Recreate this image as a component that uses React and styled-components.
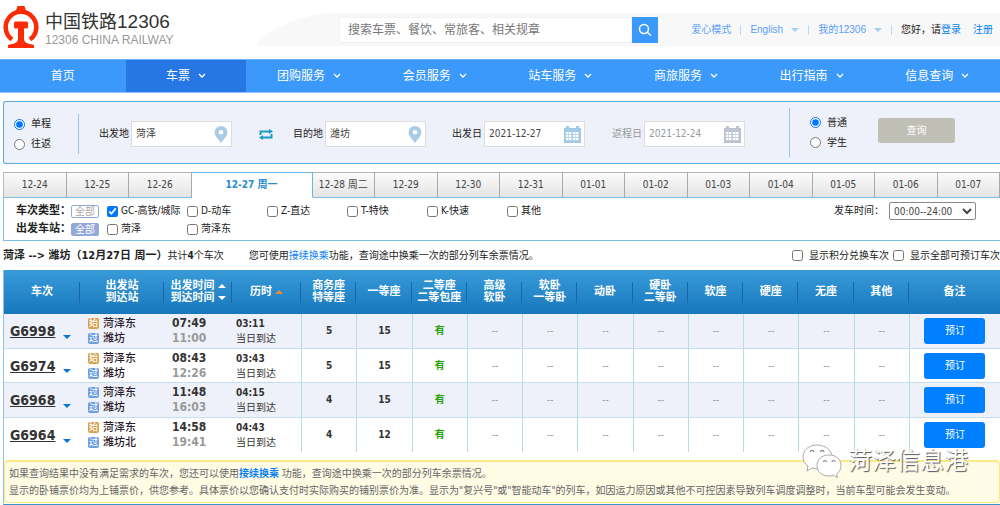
import React, { useState } from 'react';
import styled, { createGlobalStyle } from 'styled-components';

//==============================Global Styles===========================
const GlobalStyle = createGlobalStyle`
* { box-sizing: border-box; }
body {
  margin: 0;
  background: white;
  color: #222;
  font-family: "DejaVu Sans Condensed", "Noto Sans CJK SC", sans-serif;
  font-size: 10px;
  line-height: 14px;
  overflow-x: hidden;
}
a { color: #0a82f5; text-decoration: none; }
button, input, select { font: inherit; margin: 0; }
`;

//==============================Header===========================
const Header = styled.header`
display: flex;
align-items: center;
height: 59px;
font-family: "Liberation Sans", "Noto Sans CJK SC", sans-serif;
`;

const Logo = styled.a`
display: flex;
align-items: center;
gap: 6px;
width: 255px;
padding-left: 3px;
padding-bottom: 5px;
flex-shrink: 0;
`;

const LogoText = styled.span`
padding-top: 4px;
`;

const LogoName = styled.span`
display: block;
color: #333;
font-size: 18px;
line-height: 22px;
`;

const LogoNumber = styled.span`
font-size: 19px;
`;

const LogoSub = styled.span`
display: block;
color: #999;
font-size: 12px;
line-height: 14px;
white-space: nowrap;
`;

const Curve = styled.svg`
display: block;
flex-shrink: 0;
`;

const Band = styled.div`
display: flex;
align-items: center;
justify-content: space-between;
flex: 1;
height: 33px;
background: #f8f8f8;
padding-right: 7px;
white-space: nowrap;
`;

const SearchForm = styled.form`
display: flex;
width: 319px;
height: 26px;
`;

const SearchInput = styled.input`
flex: 1;
min-width: 0;
border: 1px solid #f1f1f1;
background: white;
padding: 0 8px;
font-size: 12px;
&::placeholder { color: #777; opacity: 1; }
&:focus { outline: 1px solid #3b99fc; }
`;

const SearchButton = styled.button`
display: flex;
align-items: center;
justify-content: center;
width: 26px;
padding: 0;
border: 0;
background: #3b99fc;
cursor: pointer;
`;

const UserLinks = styled.div`
display: flex;
align-items: center;
color: #222;
`;

const UserLink = styled.a`
display: flex;
align-items: center;
gap: 8px;
padding-right: 9px;
margin-right: 9px;
color: #5a9ff5;
border-right: 1px solid #b8dcf8;
line-height: 10px;
`;

const Login = styled.a`
margin-right: 12px;
`;

//==============================Nav===========================
const Nav = styled.nav`
display: flex;
height: 34px;
background: #3b99fc;
border-top: 1px solid #6ab2fb;
border-bottom: 1px solid #8cc4fb;
`;

const NavItem = styled.a`
display: flex;
align-items: center;
justify-content: center;
gap: 8px;
flex: ${props => (props.$active ? 121 : 126)} 1 0;
background: ${props => (props.$active ? '#2676e3' : 'transparent')};
color: white;
font-size: 12px;
&:hover { background: #2676e3; }
`;

//==============================Query panel===========================
const Main = styled.main`
padding: 8px 0 0 3px;
`;

const Panel = styled.form`
display: flex;
align-items: center;
height: 63px;
border: 1px solid #5ba9de;
border-right: 0;
border-radius: 3px 0 0 3px;
background: #eef1f9;
white-space: nowrap;
`;

const RadioGroup = styled.div`
display: flex;
flex-direction: column;
gap: 6px;
padding-left: ${props => props.$left};
width: ${props => props.$width};
height: ${props => props.$height};
justify-content: center;
flex-shrink: 0;
`;

const TripRadios = styled(RadioGroup)`
border-right: 1px solid #8fcaec;
margin-top: 3px;
`;

const Check = styled.label`
display: flex;
align-items: center;
gap: ${props => props.$gap || '3px'};
white-space: nowrap;
input { width: 11px; height: 11px; flex-shrink: 0; }
`;

const Field = styled.label`
display: flex;
align-items: center;
gap: 2px;
margin-left: ${props => props.$left};
margin-top: 3px;
color: ${props => (props.$muted ? '#999' : '#222')};
`;

const Box = styled.span`
display: flex;
align-items: center;
width: 101px;
height: 26px;
padding: 0 3px;
border: 1px solid #dcdcdc;
background: white;
`;

const BoxInput = styled.input`
flex: 1;
min-width: 0;
border: 0;
padding: 0 0 0 1px;
background: transparent;
color: ${props => (props.$muted ? '#999' : '#444')};
&:focus { outline: none; }
`;

const SwapButton = styled.button`
display: flex;
margin-left: 27px;
margin-top: 3px;
padding: 0;
border: 0;
background: transparent;
cursor: pointer;
`;

const TypeRadios = styled(RadioGroup)`
border-left: 1px solid #8fcaec;
margin-left: 44px;
`;

const QueryButton = styled.button`
width: 77px;
height: 25px;
padding: 0;
border: 0;
border-radius: 3px;
background: #bfbfb6;
color: white;
margin-bottom: 4px;
`;

//==============================Date tabs and filters===========================
const Tabs = styled.div`
display: flex;
margin-top: 8px;
border-left: 1px solid #bbb;
`;

const Tab = styled.button`
flex: ${props => (props.$active ? '0 0 121px' : '1 1 0')};
min-width: 0;
height: 26px;
padding: 0;
white-space: nowrap;
cursor: pointer;
border: 0;
border-top: 1px solid ${props => (props.$active ? '#6cb6e8' : '#b5b5b5')};
border-right: 1px solid ${props => (props.$active ? '#6cb6e8' : '#aaa')};
border-bottom: 1px solid ${props => (props.$active ? 'white' : '#7cbde5')};
background: ${props => (props.$active ? 'white' : 'linear-gradient(#fbfbfb, #e4e4e4)')};
color: ${props => (props.$active ? '#2b8bd0' : '#444')};
font-weight: ${props => (props.$active ? 'bold' : 'normal')};
`;

const Filters = styled.div`
display: flex;
justify-content: space-between;
align-items: flex-start;
height: 43px;
padding: 4px 24px 0 12px;
border: 1px solid #7cbde5;
border-top: 0;
border-right: 0;
`;

const FilterRow = styled.div`
display: flex;
align-items: center;
height: 18px;
`;

const FilterName = styled.strong`
width: 55px;
font-size: 11px;
white-space: nowrap;
`;

const AllTag = styled.button`
width: 28px;
height: 13px;
margin-right: 8px;
padding: 0;
line-height: 11px;
border: 1px solid #93a9d8;
border-radius: 2px;
background: ${props => (props.$on ? '#93a9d8' : 'white')};
color: ${props => (props.$on ? 'white' : '#aaa')};
`;

const Option = styled(Check)`
width: 80px;
`;

const TimeFilter = styled.label`
display: flex;
align-items: center;
gap: 5px;
`;

const TimeSelect = styled.select`
width: 87px;
height: 18px;
padding: 0;
border: 1px solid #888;
border-radius: 2px;
background: white;
color: #444;
`;

const Summary = styled.div`
display: flex;
align-items: center;
height: 29px;
white-space: nowrap;
`;

const Route = styled.strong`
font-size: 11px;
`;

const Hint = styled.span`
margin-left: 25px;
flex: 1;
`;

const Switches = styled.div`
display: flex;
gap: 4px;
`;

//==============================Train table===========================
const Results = styled.section`
border-left: 1px solid #8cc5e8;
border-bottom: 1px solid #3a93c8;
padding-bottom: 1px;
`;

const Table = styled.table`
width: 100%;
table-layout: fixed;
border-collapse: separate;
border-spacing: 0;
`;

const HeadRow = styled.tr`
height: 44px;
background: linear-gradient(#389bd9, #1877bd);
`;

const Th = styled.th`
padding: 0;
color: white;
font-size: 11px;
line-height: 12px;
white-space: nowrap;
background: linear-gradient(#1c64a8, #1c64a8) right center / 1px 21px no-repeat;
&:last-child { background: none; }
`;

const SortLine = styled.span`
display: flex;
align-items: center;
justify-content: center;
gap: 3px;
`;

const Row = styled.tr`
height: 34px;
background: white;
&:nth-child(odd) { height: 35px; background: #eef1f9; }
&:not(:last-child) td { border-bottom: 1px solid #c6dfec; }
`;

const Td = styled.td`
padding: 0;
white-space: nowrap;
`;

const SeatTd = styled(Td)`
text-align: center;
border-left: 1px solid #bcd9e6;
color: ${props => props.$color};
font-weight: ${props => (props.$strong ? 'bold' : 'normal')};
`;

const TrainLink = styled.a`
display: flex;
align-items: center;
gap: 8px;
padding-left: 6px;
color: #333;
font-size: 14px;
font-weight: bold;
line-height: 20px;
text-decoration: underline;
svg { margin-top: 11px; }
`;

const Station = styled.div`
display: flex;
align-items: center;
gap: 4px;
padding-left: 8px;
font-size: 11px;
font-weight: 500;
line-height: 15px;
color: #2b1b2b;
`;

const Badge = styled.span`
width: 11px;
height: 11px;
border-radius: 2px;
background: ${props => (props.$start ? '#d9a04c' : '#6d9ee0')};
color: white;
font-size: 9px;
line-height: 11px;
text-align: center;
`;

const Time = styled.div`
padding-left: 8px;
font-size: 12px;
font-weight: bold;
line-height: 15px;
color: ${props => (props.$arrive ? '#999' : '#333')};
`;

const Span = styled.div`
padding-left: 4px;
line-height: 15px;
color: #333;
`;

const BookButton = styled.button`
display: block;
width: 61px;
height: 26px;
margin: 0 auto;
padding: 0;
border: 0;
border-radius: 3px;
background: #0080ff;
color: white;
cursor: pointer;
`;

const Note = styled.div`
margin-top: 8px;
padding: 3px 4px;
border: 1px solid #fbe983;
border-top-width: 2px;
border-radius: 4px;
background: #fffbe5;
color: #666;
line-height: 17px;
white-space: nowrap;
overflow: hidden;
`;

const Watermark = styled.div`
position: absolute;
top: 443px;
right: 32px;
display: flex;
align-items: center;
gap: 6px;
color: white;
font-size: 24px;
line-height: 36px;
text-shadow: 1px 1px 1px #555;
pointer-events: none;
`;

//==============================Icons===========================
function RailLogo() {
  return (
    <svg width="36" height="42" viewBox="0 0 36 42">
      <path d="M9 33.500A15.300 15.300 0 1 1 27 33.500" fill="none" stroke="#fb2c05" strokeWidth="4.500" />
      <path d="M14.500 0h7l2 6h-11z" fill="#fb2c05" />
      <path d="M12.500 15.500h11q1.500 0 1.500 1.500v4q0 1.500-1.500 1.500h-2.500v10q0 4 4 5l6 1.500V42H5v-3l6-1.500q4-1 4-5v-10h-2.500q-1.500 0-1.500-1.500v-4q0-1.500 1.500-1.500z" fill="#fb2c05" />
    </svg>
  );
}

function Chevron() {
  return (
    <svg width="8" height="6" viewBox="0 0 8 6">
      <path d="M1 1l3 3 3-3" fill="none" stroke="white" strokeWidth="1.3" />
    </svg>
  );
}

function Triangle({ color, up, size = 8 }) {
  return (
    <svg width={size} height="4" viewBox="0 0 8 4" preserveAspectRatio="none">
      <path d={up ? 'M0 4h8L4 0z' : 'M0 0h8L4 4z'} fill={color} />
    </svg>
  );
}

function Pin() {
  return (
    <svg width="14" height="17" viewBox="0 0 14 17">
      <path d="M7 0a6.4 6.4 0 0 1 6.4 6.4C13.4 10.500 9.500 13 7 17 4.500 13 .6 10.500.6 6.400A6.400 6.400 0 0 1 7 0z" fill="#a9cce6" />
      <circle cx="7" cy="6.300" r="2.300" fill="white" />
    </svg>
  );
}

function Calendar({ color }) {
  return (
    <svg width="17" height="17" viewBox="0 0 17 17">
      <path d="M0 2h2V0h3v2h7V0h3v2h2v15H0z" fill={color} />
      {[6, 9, 12].map(y => [2, 5, 9, 12].map(x => (
        <rect key={`${x}-${y}`} x={x} y={y} width="2.500" height="2.200" fill="white" />
      )))}
    </svg>
  );
}

function WeChat() {
  return (
    <svg width="40" height="36" viewBox="0 0 40 36">
      <g fill="white" stroke="#aaa" strokeWidth="1">
        <path d="M15 2C7 2 1 7 1 14c0 4 2 7 5 9l-1 5 5-3c10 3 20-2 20-11C30 7 23 2 15 2z" />
        <path d="M27 12c-7 0-12 4-12 10.500S20 33 27 33c1.500 0 3-.2 4.500-.7l4 2.400-1-3.500c2.700-2 4.500-5 4.500-8.500C39 16 34 12 27 12z" />
      </g>
      <g fill="none" stroke="#888" strokeWidth="1.200">
        <path d="M8.500 9a1.700 1.700 0 0 1 3.400 0M18.500 9a1.700 1.700 0 0 1 3.400 0" />
        <path d="M21.500 19a1.500 1.500 0 0 1 3 0M30 19a1.500 1.500 0 0 1 3 0" />
      </g>
    </svg>
  );
}

//==============================Data===========================
const navItems = ['首页', '车票', '团购服务', '会员服务', '站车服务', '商旅服务', '出行指南', '信息查询'];

const dates = ['12-24', '12-25', '12-26', '12-27 周一', '12-28 周二', '12-29', '12-30', '12-31',
  '01-01', '01-02', '01-03', '01-04', '01-05', '01-06', '01-07'];

const trainTypes = ['GC-高铁/城际', 'D-动车', 'Z-直达', 'T-特快', 'K-快速', '其他'];

const seatHeads = [['商务座', '特等座'], ['一等座'], ['二等座', '二等包座'], ['高级', '软卧'], ['软卧', '一等卧'],
  ['动卧'], ['硬卧', '二等卧'], ['软座'], ['硬座'], ['无座'], ['其他']];

const trains = [
  { no: 'G6998', from: '菏泽东', to: '潍坊', start: true, dep: '07:49', arr: '11:00', span: '03:11', seats: ['5', '15', '有'] },
  { no: 'G6974', from: '菏泽东', to: '潍坊', start: true, dep: '08:43', arr: '12:26', span: '03:43', seats: ['5', '15', '有'] },
  { no: 'G6968', from: '菏泽东', to: '潍坊', start: false, dep: '11:48', arr: '16:03', span: '04:15', seats: ['4', '15', '有'] },
  { no: 'G6964', from: '菏泽东', to: '潍坊北', start: true, dep: '14:58', arr: '19:41', span: '04:43', seats: ['4', '12', '有'] },
];

function seatColor(value) {
  if (value === '有') return '#26a306';
  return value === '--' ? '#999' : '#333';
}

//==============================Sections===========================
function TopBar() {
  return (
    <Header>
      <Logo href="#">
        <RailLogo />
        <LogoText>
          <LogoName>中国铁路<LogoNumber>12306</LogoNumber></LogoName>
          <LogoSub>12306 CHINA RAILWAY</LogoSub>
        </LogoText>
      </Logo>
      <Curve width="84" height="33" viewBox="0 0 84 33">
        <path d="M0 33C0 28 34 0 84 0v33z" fill="#f8f8f8" />
      </Curve>
      <Band>
        <SearchForm onSubmit={e => e.preventDefault()}>
          <SearchInput aria-label="搜索" placeholder="搜索车票、餐饮、常旅客、相关规章" />
          <SearchButton type="submit" aria-label="搜索">
            <svg width="14" height="14" viewBox="0 0 14 14" fill="none" stroke="white" strokeWidth="1.500">
              <circle cx="6" cy="6" r="4.500" />
              <path d="M9.300 9.300l3.700 3.200" />
            </svg>
          </SearchButton>
        </SearchForm>
        <UserLinks>
          <UserLink href="#">爱心模式</UserLink>
          <UserLink href="#">English <Triangle color="#a5cff0" /></UserLink>
          <UserLink href="#">我的12306 <Triangle color="#a5cff0" /></UserLink>
          您好，请<Login href="#">登录</Login>
          <a href="#">注册</a>
        </UserLinks>
      </Band>
    </Header>
  );
}

function QueryPanel() {
  return (
    <Panel onSubmit={e => e.preventDefault()}>
      <TripRadios $left="10px" $width="75px" $height="40px">
        <Check $gap="6px"><input type="radio" name="trip" defaultChecked />单程</Check>
        <Check $gap="6px"><input type="radio" name="trip" />往返</Check>
      </TripRadios>
      <Field $left="20px">出发地<Box><BoxInput defaultValue="菏泽" /><Pin /></Box></Field>
      <SwapButton type="button" aria-label="换乘方向">
        <svg width="14" height="11" viewBox="0 0 14 11" fill="none" stroke="#1b9ac4" strokeWidth="2">
          <path d="M1.500 6V2.500H11M12.500 5v3.500H3" />
          <path d="M10 0l4 2.500L10 5zM4 6L0 8.500 4 11z" fill="#1b9ac4" stroke="none" />
        </svg>
      </SwapButton>
      <Field $left="20px">目的地<Box><BoxInput defaultValue="潍坊" /><Pin /></Box></Field>
      <Field $left="26px">出发日<Box><BoxInput defaultValue="2021-12-27" /><Calendar color="#a3cbe8" /></Box></Field>
      <Field $left="27px" $muted>返程日<Box><BoxInput $muted defaultValue="2021-12-24" /><Calendar color="#bcc3d3" /></Box></Field>
      <TypeRadios $left="20px" $width="89px" $height="49px">
        <Check $gap="6px"><input type="radio" name="kind" defaultChecked />普通</Check>
        <Check $gap="6px"><input type="radio" name="kind" />学生</Check>
      </TypeRadios>
      <QueryButton type="submit">查询</QueryButton>
    </Panel>
  );
}

function FilterPanel() {
  return (
    <Filters>
      <div>
        <FilterRow>
          <FilterName>车次类型：</FilterName>
          <AllTag type="button">全部</AllTag>
          {trainTypes.map((type, i) => (
            <Option key={type}><input type="checkbox" defaultChecked={i === 0} />{type}</Option>
          ))}
        </FilterRow>
        <FilterRow>
          <FilterName>出发车站：</FilterName>
          <AllTag type="button" $on>全部</AllTag>
          <Option><input type="checkbox" />菏泽</Option>
          <Option><input type="checkbox" />菏泽东</Option>
        </FilterRow>
      </div>
      <TimeFilter>
        发车时间：
        <TimeSelect><option>00:00--24:00</option></TimeSelect>
      </TimeFilter>
    </Filters>
  );
}

function TrainTable() {
  return (
    <Table>
      <colgroup>
        <col style={{ width: '76px' }} />
        <col style={{ width: '84px' }} />
        <col style={{ width: '68px' }} />
        <col style={{ width: '69px' }} />
        {seatHeads.map((head, i) => <col key={i} style={{ width: '5.55%' }} />)}
        <col />
      </colgroup>
      <thead>
        <HeadRow>
          <Th>车次</Th>
          <Th>出发站<br />到达站</Th>
          <Th>
            <SortLine>出发时间<Triangle color="white" up /></SortLine>
            <SortLine>到达时间<Triangle color="white" /></SortLine>
          </Th>
          <Th><SortLine>历时<Triangle color="#f08a2c" up /></SortLine></Th>
          {seatHeads.map((head, i) => (
            <Th key={i}>{head[0]}{head[1] && <><br />{head[1]}</>}</Th>
          ))}
          <Th>备注</Th>
        </HeadRow>
      </thead>
      <tbody>
        {trains.map(train => (
          <Row key={train.no}>
            <Td><TrainLink href="#">{train.no}<Triangle color="#0a75e0" /></TrainLink></Td>
            <Td>
              <Station><Badge $start={train.start}>{train.start ? '始' : '过'}</Badge>{train.from}</Station>
              <Station><Badge>过</Badge>{train.to}</Station>
            </Td>
            <Td>
              <Time>{train.dep}</Time>
              <Time $arrive>{train.arr}</Time>
            </Td>
            <Td>
              <Span><b>{train.span}</b></Span>
              <Span>当日到达</Span>
            </Td>
            {seatHeads.map((head, i) => {
              const value = train.seats[i] || '--';
              return <SeatTd key={i} $color={seatColor(value)} $strong={value !== '--'}>{value}</SeatTd>;
            })}
            <SeatTd><BookButton type="button">预订</BookButton></SeatTd>
          </Row>
        ))}
      </tbody>
    </Table>
  );
}

function App() {
  const [date, setDate] = useState('12-27 周一');

  return (
    <div>
      <GlobalStyle />
      <TopBar />
      <Nav>
        {navItems.map((item, i) => (
          <NavItem key={item} href="#" $active={item === '车票'}>
            {item}{i > 0 && <Chevron />}
          </NavItem>
        ))}
      </Nav>
      <Main>
        <QueryPanel />
        <Tabs>
          {dates.map(d => (
            <Tab key={d} type="button" $active={d === date} onClick={() => setDate(d)}>{d}</Tab>
          ))}
        </Tabs>
        <FilterPanel />
        <Summary>
          <Route>菏泽 --&gt; 潍坊（12月27日 周一）</Route>共计<b>4</b>个车次
          <Hint>您可使用<a href="#">接续换乘</a>功能，查询途中换乘一次的部分列车余票情况。</Hint>
          <Switches>
            <Check $gap="6px"><input type="checkbox" />显示积分兑换车次</Check>
            <Check $gap="6px"><input type="checkbox" />显示全部可预订车次</Check>
          </Switches>
        </Summary>
        <Results>
          <TrainTable />
          <Note>
            如果查询结果中没有满足需求的车次，您还可以使用<a href="#"><b>接续换乘</b></a> 功能，查询途中换乘一次的部分列车余票情况。<br />
            显示的卧铺票价均为上铺票价，供您参考。具体票价以您确认支付时实际购买的铺别票价为准。显示为"复兴号"或"智能动车"的列车，如因运力原因或其他不可控因素导致列车调度调整时，当前车型可能会发生变动。
          </Note>
        </Results>
      </Main>
      <Watermark><WeChat />菏泽信息港</Watermark>
    </div>
  );
}

export default App;
